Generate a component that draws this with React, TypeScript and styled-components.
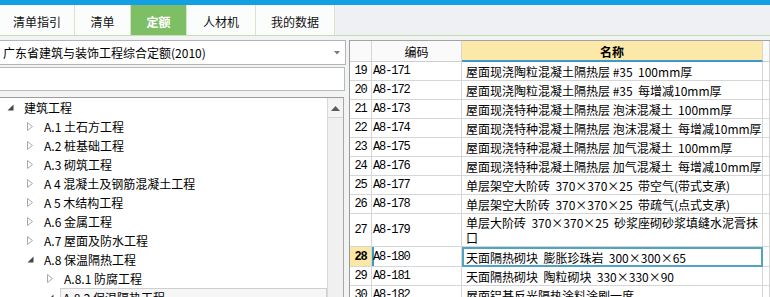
import React from 'react';
import styled, { createGlobalStyle } from 'styled-components';

const GlobalStyle = createGlobalStyle`
  html, body { margin: 0; padding: 0; }
  body {
    width: 770px;
    height: 297px;
    overflow: hidden;
    background: #f2f3f5;
    font-family: "Noto Sans CJK SC", "Noto Sans", sans-serif;
    font-size: 12px;
    color: #000;
  }
`;

const Page = styled.div`
  display: flex;
  flex-direction: column;
  height: 297px;
`;

const TopStripe = styled.div`
  height: 5px;
  background: #12a0e3;
`;

const TabBar = styled.div`
  display: flex;
  height: 30px;
  background: #eef0f4;
  border-bottom: 1px solid #c3dfb3;
`;

const Tab = styled.div<{ $w: number; $active?: boolean }>`
  width: ${(p) => p.$w}px;
  box-sizing: border-box;
  display: flex;
  align-items: center;
  justify-content: center;
  padding-top: 2px;
  background: ${(p) => (p.$active ? '#7ebf65' : '#fbfcfc')};
  color: ${(p) => (p.$active ? '#fff' : '#111')};
  font-weight: ${(p) => (p.$active ? 700 : 400)};
  border-right: 1px solid #d6e6cc;
`;

const Body = styled.div`
  flex: 1;
  min-height: 0;
  display: flex;
  padding-top: 4px;
`;

const LeftPanel = styled.div`
  width: 346px;
  display: flex;
  flex-direction: column;
`;

const SelectBox = styled.div`
  height: 25px;
  box-sizing: border-box;
  background: #fff;
  border: 1px solid #b4b4b4;
  border-left: none;
  display: flex;
  align-items: center;
  justify-content: space-between;
  padding: 0 5px 0 3px;
`;

const SearchBox = styled.div`
  height: 24px;
  box-sizing: border-box;
  margin-top: 2px;
  background: #fff;
  border: 1px solid #b9b9b9;
  border-left: none;
  margin-right: 1px;
`;

const TreeBox = styled.div`
  flex: 1;
  min-height: 0;
  margin-top: 6px;
  display: flex;
  background: #fff;
  border-top: 1px solid #9d9d9d;
  border-right: 1px solid #a8a8a8;
  margin-right: 2px;
  overflow: hidden;
`;

const TreeList = styled.div`
  flex: 1;
  min-width: 0;
`;

const TreeRow = styled.div<{ $level: number }>`
  height: 19px;
  display: flex;
  align-items: center;
  padding-left: ${(p) => 4 + p.$level * 20}px;
  white-space: nowrap;
`;

const ArrowSlot = styled.span`
  width: 12px;
  margin-right: 7px;
  display: flex;
  align-items: center;
  justify-content: center;
`;

const TreeLabel = styled.span<{ $selected?: boolean }>`
  flex: ${(p) => (p.$selected ? 1 : 'none')};
  line-height: 17px;
  margin-left: ${(p) => (p.$selected ? '-3px' : '0')};
  padding: 0 ${(p) => (p.$selected ? '2px' : '0')};
  border: 1px solid ${(p) => (p.$selected ? '#cfcfcf' : 'transparent')};
  background: ${(p) => (p.$selected ? '#f6f6f6' : 'transparent')};
`;

const ScrollBar = styled.div`
  width: 15px;
  background: #f0f0f0;
  border-left: 1px solid #d8d8d8;
  display: flex;
  flex-direction: column;
`;

const ScrollButton = styled.div`
  height: 17px;
  margin-top: 2px;
  background: #f4f4f4;
  border-bottom: 1px solid #d6d6d6;
  display: flex;
  align-items: center;
  justify-content: center;
`;

const Splitter = styled.div`
  width: 3px;
`;

const TableWrap = styled.div`
  flex: 1;
  min-width: 0;
  background: #fff;
  border-left: 1px solid #9a9a9a;
  border-top: 1px solid #a2a2a2;
  overflow: hidden;
`;

const Row = styled.div<{ $h: number }>`
  display: grid;
  grid-template-columns: 22px 90px 301px 1fr;
  height: ${(p) => p.$h}px;
`;

const Cell = styled.div`
  box-sizing: border-box;
  border-right: 1px solid #d6d6d6;
  border-bottom: 1px solid #d6d6d6;
  display: flex;
  align-items: center;
  overflow: hidden;
`;

const HeadCell = styled(Cell)<{ $accent?: boolean }>`
  justify-content: center;
  background: ${(p) => (p.$accent ? '#fce8a8' : '#fafafa')};
  font-weight: ${(p) => (p.$accent ? 700 : 400)};
  border-bottom: ${(p) => (p.$accent ? '2px solid #3a9bc7' : '1px solid #cfcfcf')};
  padding-top: 1px;
`;

const NumCell = styled(Cell)<{ $current?: boolean }>`
  justify-content: center;
  font-family: "Liberation Mono", monospace;
  font-size: 12px;
  letter-spacing: -1.1px;
  background: ${(p) => (p.$current ? '#fde7a6' : '#fff')};
  font-weight: ${(p) => (p.$current ? 700 : 400)};
`;

const CodeCell = styled(Cell)<{ $current?: boolean }>`
  padding-left: 1px;
  font-family: "Liberation Mono", monospace;
  font-size: 12px;
  letter-spacing: -1.1px;
  box-shadow: ${(p) => (p.$current ? 'inset 2px 0 0 #3a9bc7' : 'none')};
`;

const NameCell = styled(Cell)<{ $current?: boolean }>`
  white-space: pre-wrap;
  line-height: 15px;
  border: ${(p) => (p.$current ? '2px solid #4fa4c2' : 'none')};
  border-right: ${(p) => (p.$current ? '2px solid #4fa4c2' : '1px solid #d6d6d6')};
  border-bottom: ${(p) => (p.$current ? '2px solid #4fa4c2' : '1px solid #d6d6d6')};
  padding-left: ${(p) => (p.$current ? 2 : 4)}px;
`;

const Collapsed = () => (
  <svg width="6" height="9" viewBox="0 0 6 9">
    <path d="M0.5 0.5 L5.5 4.5 L0.5 8.5 Z" fill="#fff" stroke="#a8a8a8" strokeWidth="1" />
  </svg>
);

const Expanded = () => (
  <svg width="7" height="7" viewBox="0 0 7 7">
    <path d="M6.5 0.5 L6.5 6.5 L0.5 6.5 Z" fill="#474747" />
  </svg>
);

const tabs = [
  { label: '清单指引', w: 75 },
  { label: '清单', w: 56 },
  { label: '定额', w: 56, active: true },
  { label: '人材机', w: 69 },
  { label: '我的数据', w: 79 },
];

const tree = [
  { level: 0, open: true, label: '建筑工程' },
  { level: 1, label: 'A.1 土石方工程' },
  { level: 1, label: 'A.2 桩基础工程' },
  { level: 1, label: 'A.3 砌筑工程' },
  { level: 1, label: 'A 4 混凝土及钢筋混凝土工程' },
  { level: 1, label: 'A 5 木结构工程' },
  { level: 1, label: 'A.6 金属工程' },
  { level: 1, label: 'A.7 屋面及防水工程' },
  { level: 1, open: true, label: 'A.8 保温隔热工程' },
  { level: 2, label: 'A.8.1 防腐工程' },
  { level: 2, open: true, selected: true, label: 'A.8.2 保温隔热工程' },
];

const rows = [
  { n: 19, code: 'A8-171', name: '屋面现浇陶粒混凝土隔热层 #35  100mm厚' },
  { n: 20, code: 'A8-172', name: '屋面现浇陶粒混凝土隔热层 #35  每增减10mm厚' },
  { n: 21, code: 'A8-173', name: '屋面现浇特种混凝土隔热层 泡沫混凝土  100mm厚' },
  { n: 22, code: 'A8-174', name: '屋面现浇特种混凝土隔热层 泡沫混凝土  每增减10mm厚' },
  { n: 23, code: 'A8-175', name: '屋面现浇特种混凝土隔热层 加气混凝土  100mm厚' },
  { n: 24, code: 'A8-176', name: '屋面现浇特种混凝土隔热层 加气混凝土  每增减10mm厚' },
  { n: 25, code: 'A8-177', name: '单层架空大阶砖  370×370×25  带空气(带式支承)' },
  { n: 26, code: 'A8-178', name: '单层架空大阶砖  370×370×25  带疏气(点式支承)' },
  { n: 27, code: 'A8-179', name: '单层大阶砖  370×370×25  砂浆座砌砂浆填缝水泥膏抹\n口', h: 33 },
  { n: 28, code: 'A8-180', name: '天面隔热砌块  膨胀珍珠岩  300×300×65', current: true, h: 20 },
  { n: 29, code: 'A8-181', name: '天面隔热砌块  陶粒砌块  330×330×90' },
  { n: 30, code: 'A8-182', name: '屋面铝基反光隔热涂料涂刷一度' },
];

export default function App() {
  return (
    <Page>
      <GlobalStyle />
      <TopStripe />
      <TabBar>
        {tabs.map((t) => (
          <Tab key={t.label} $w={t.w} $active={t.active}>
            {t.label}
          </Tab>
        ))}
      </TabBar>
      <Body>
        <LeftPanel>
          <SelectBox>
            <span>广东省建筑与装饰工程综合定额(2010)</span>
            <svg width="6" height="4" viewBox="0 0 6 4">
              <path d="M0 0 L6 0 L3 3.5 Z" fill="#7a7a7a" />
            </svg>
          </SelectBox>
          <SearchBox />
          <TreeBox>
            <TreeList>
              {tree.map((t) => (
                <TreeRow key={t.label} $level={t.level}>
                  <ArrowSlot>{t.open ? <Expanded /> : <Collapsed />}</ArrowSlot>
                  <TreeLabel $selected={t.selected}>{t.label}</TreeLabel>
                </TreeRow>
              ))}
            </TreeList>
            <ScrollBar>
              <ScrollButton>
                <svg width="9" height="5" viewBox="0 0 9 5">
                  <path d="M0 5 L4.5 0 L9 5 Z" fill="#5a5a5a" />
                </svg>
              </ScrollButton>
            </ScrollBar>
          </TreeBox>
        </LeftPanel>
        <Splitter />
        <TableWrap>
          <Row $h={21}>
            <HeadCell />
            <HeadCell>编码</HeadCell>
            <HeadCell $accent>名称</HeadCell>
            <HeadCell />
          </Row>
          {rows.map((r) => (
            <Row key={r.n} $h={r.h ?? 19}>
              <NumCell $current={r.current}>{r.n}</NumCell>
              <CodeCell $current={r.current}>{r.code}</CodeCell>
              <NameCell $current={r.current}>{r.name}</NameCell>
              <Cell />
            </Row>
          ))}
        </TableWrap>
      </Body>
    </Page>
  );
}
